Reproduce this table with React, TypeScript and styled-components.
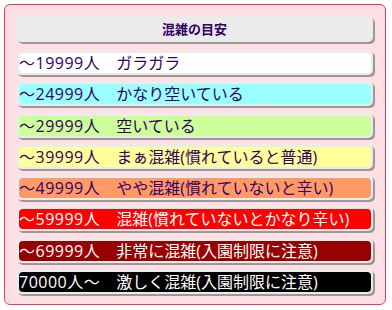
import * as React from "react";
import styled, { createGlobalStyle } from "styled-components";

interface ILevel {
  range: string;
  label: string;
  bg: string;
  light?: boolean;
}

const levels: ILevel[] = [
  { range: "～19999人", label: "ガラガラ", bg: "#ffffff" },
  { range: "～24999人", label: "かなり空いている", bg: "#99ffff" },
  { range: "～29999人", label: "空いている", bg: "#ccff99" },
  { range: "～39999人", label: "まぁ混雑(慣れていると普通)", bg: "#ffff99" },
  { range: "～49999人", label: "やや混雑(慣れていないと辛い)", bg: "#ff9966" },
  { range: "～59999人", label: "混雑(慣れていないとかなり辛い)", bg: "#ff0000", light: true },
  { range: "～69999人", label: "非常に混雑(入園制限に注意)", bg: "#990000", light: true },
  { range: "70000人～", label: "激しく混雑(入園制限に注意)", bg: "#000000", light: true },
];

const GlobalStyle = createGlobalStyle`
  body {
    margin: 0;
    background: #ffffff;
    font-family: "Open Sans", "Noto Sans CJK JP", sans-serif;
  }
`;

export default function App() {
  return (
    <>
      <GlobalStyle />
      <Panel>
        <Heading>混雑の目安</Heading>
        <List>
          {levels.map((lv) => (
            <Row key={lv.range}>
              <Swatch $bg={lv.bg} $light={lv.light}>
                <Range>{lv.range}</Range>　{lv.label}
              </Swatch>
            </Row>
          ))}
        </List>
      </Panel>
    </>
  );
}

const Panel = styled.div`
  box-sizing: border-box;
  width: 382px;
  margin: 4px;
  padding: 11px 12px 10px 11px;
  background: #ffdfe4;
  border: 1px solid #d9405e;
  border-radius: 6px;
`;

const Heading = styled.h2`
  margin: 0 0 8px;
  height: 26px;
  line-height: 26px;
  text-align: center;
  font-family: "Noto Sans CJK JP", sans-serif;
  font-size: 13px;
  font-weight: bold;
  color: #330066;
  background: #ebebeb;
  border-radius: 5px;
  box-shadow: 2px 2px 0 #999999;
`;

const List = styled.div`
  display: flex;
  flex-direction: column;
  gap: 6.3px;
`;

const Row = styled.div`
  padding: 3px 2px 2px 3px;
  background: #ebebeb;
  border-radius: 5px;
  box-shadow: 2px 2px 0 #999999;
`;

const Swatch = styled.div<{ $bg: string; $light?: boolean }>`
  height: 20px;
  line-height: 20px;
  font-size: 16px;
  white-space: nowrap;
  color: ${(p) => (p.$light ? "#ffffff" : "#330066")};
  background: ${(p) => p.$bg};
  border-radius: 4px;
`;

const Range = styled.span`
  letter-spacing: 0.5px;
`;
